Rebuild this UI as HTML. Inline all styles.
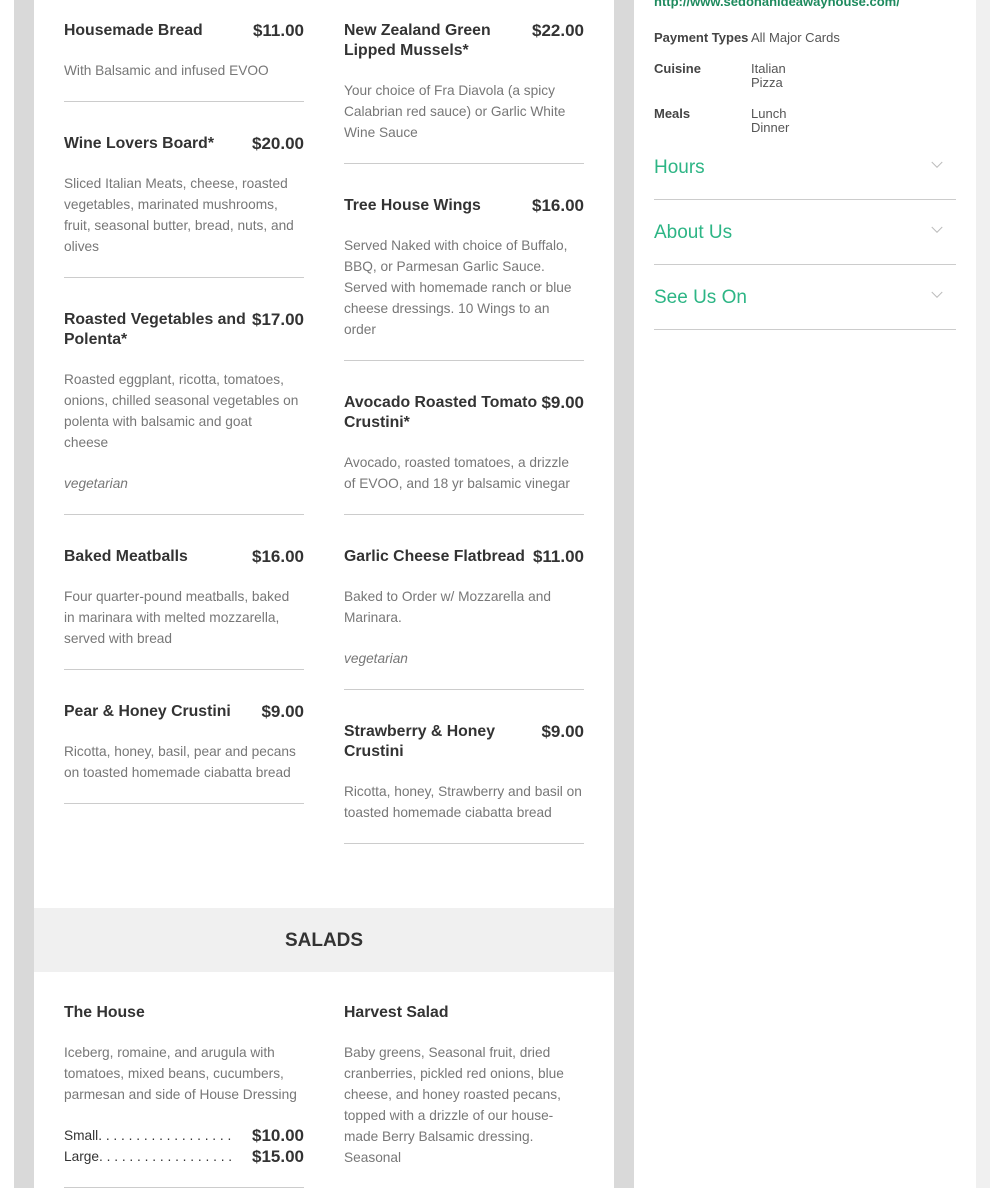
<!DOCTYPE html>
<html><head><meta charset="utf-8"><style>
body{margin:0;width:990px;height:1188px;overflow:hidden;background:#fff;font-family:"Liberation Sans",sans-serif;position:relative}
.a{position:absolute;white-space:nowrap}
.g1{position:absolute;left:14px;top:0;width:620px;height:1188px;background:#d9d9d9}
.card{position:absolute;left:34px;top:0;width:580px;height:1188px;background:#fff}
.side{position:absolute;left:634px;top:0;width:342px;height:1188px;background:#fff}
.g2{position:absolute;left:976px;top:0;width:14px;height:1188px;background:#f0f0f0}
.t{font-size:15.8px;font-weight:bold;color:#333;line-height:20px;margin-top:1px}
.p{font-size:17px;font-weight:bold;color:#333;line-height:20px;text-align:right;width:80px;margin-top:1px}
.d{font-size:13.7px;color:#777;line-height:21px;margin-top:1px}
.v{font-size:13.7px;color:#777;font-style:italic;line-height:21px;margin-top:1px}
.l{position:absolute;height:1px;width:240px;background:#ccc}
.k{font-size:13px;font-weight:bold;color:#444;line-height:14px}
.kv{font-size:13px;color:#555;line-height:14px}
.h{font-size:19px;color:#2db585;line-height:24px;margin-top:1px}
.sl{position:absolute;left:654px;width:302px;height:1px;background:#ccc}
.ch{position:absolute;left:931px;width:12px;height:12px}
</style></head><body>
<div class="g1"></div><div class="card"></div><div class="side"></div><div class="g2"></div>

<div class="a t" style="left:64px;top:20px">Housemade Bread</div><div class="a p" style="left:224px;top:20px">$11.00</div>
<div class="a d" style="left:64px;top:59px">With Balsamic and infused EVOO</div>
<div class="l" style="left:64px;top:101px"></div>

<div class="a t" style="left:64px;top:133px">Wine Lovers Board*</div><div class="a p" style="left:224px;top:133px">$20.00</div>
<div class="a d" style="left:64px;top:172px">Sliced Italian Meats, cheese, roasted<br>vegetables, marinated mushrooms,<br>fruit, seasonal butter, bread, nuts, and<br>olives</div>
<div class="l" style="left:64px;top:277px"></div>

<div class="a t" style="left:64px;top:309px">Roasted Vegetables and<br>Polenta*</div><div class="a p" style="left:224px;top:309px">$17.00</div>
<div class="a d" style="left:64px;top:368px">Roasted eggplant, ricotta, tomatoes,<br>onions, chilled seasonal vegetables on<br>polenta with balsamic and goat<br>cheese</div>
<div class="a v" style="left:64px;top:472px">vegetarian</div>
<div class="l" style="left:64px;top:514px"></div>

<div class="a t" style="left:64px;top:546px">Baked Meatballs</div><div class="a p" style="left:224px;top:546px">$16.00</div>
<div class="a d" style="left:64px;top:585px">Four quarter-pound meatballs, baked<br>in marinara with melted mozzarella,<br>served with bread</div>
<div class="l" style="left:64px;top:669px"></div>

<div class="a t" style="left:64px;top:701px">Pear &amp; Honey Crustini</div><div class="a p" style="left:224px;top:701px">$9.00</div>
<div class="a d" style="left:64px;top:740px">Ricotta, honey, basil, pear and pecans<br>on toasted homemade ciabatta bread</div>
<div class="l" style="left:64px;top:803px"></div>

<div class="a t" style="left:344px;top:20px">New Zealand Green<br>Lipped Mussels*</div><div class="a p" style="left:504px;top:20px">$22.00</div>
<div class="a d" style="left:344px;top:79px">Your choice of Fra Diavola (a spicy<br>Calabrian red sauce) or Garlic White<br>Wine Sauce</div>
<div class="l" style="left:344px;top:163px"></div>

<div class="a t" style="left:344px;top:195px">Tree House Wings</div><div class="a p" style="left:504px;top:195px">$16.00</div>
<div class="a d" style="left:344px;top:234px">Served Naked with choice of Buffalo,<br>BBQ, or Parmesan Garlic Sauce.<br>Served with homemade ranch or blue<br>cheese dressings. 10 Wings to an<br>order</div>
<div class="l" style="left:344px;top:360px"></div>

<div class="a t" style="left:344px;top:392px">Avocado Roasted Tomato<br>Crustini*</div><div class="a p" style="left:504px;top:392px">$9.00</div>
<div class="a d" style="left:344px;top:451px">Avocado, roasted tomatoes, a drizzle<br>of EVOO, and 18 yr balsamic vinegar</div>
<div class="l" style="left:344px;top:514px"></div>

<div class="a t" style="left:344px;top:546px">Garlic Cheese Flatbread</div><div class="a p" style="left:504px;top:546px">$11.00</div>
<div class="a d" style="left:344px;top:585px">Baked to Order w/ Mozzarella and<br>Marinara.</div>
<div class="a v" style="left:344px;top:647px">vegetarian</div>
<div class="l" style="left:344px;top:689px"></div>

<div class="a t" style="left:344px;top:721px">Strawberry &amp; Honey<br>Crustini</div><div class="a p" style="left:504px;top:721px">$9.00</div>
<div class="a d" style="left:344px;top:780px">Ricotta, honey, Strawberry and basil on<br>toasted homemade ciabatta bread</div>
<div class="l" style="left:344px;top:843px"></div>

<div style="position:absolute;left:34px;top:908px;width:580px;height:64px;background:#f0f0f0;text-align:center;line-height:66px;font-size:19px;font-weight:bold;color:#333">SALADS</div>

<div class="a t" style="left:64px;top:1002px">The House</div>
<div class="a d" style="left:64px;top:1041px">Iceberg, romaine, and arugula with<br>tomatoes, mixed beans, cucumbers,<br>parmesan and side of House Dressing</div>
<div class="a d" style="left:64px;top:1124px;color:#333">Small. . . . . . . . . . . . . . . . . . . .</div><div class="a p" style="left:224px;top:1125px;background:#fff;width:72px;left:232px">$10.00</div>
<div class="a d" style="left:64px;top:1145px;color:#333">Large. . . . . . . . . . . . . . . . . . . .</div><div class="a p" style="left:232px;top:1146px;background:#fff;width:72px">$15.00</div>
<div class="l" style="left:64px;top:1187px"></div>

<div class="a t" style="left:344px;top:1002px">Harvest Salad</div>
<div class="a d" style="left:344px;top:1041px">Baby greens, Seasonal fruit, dried<br>cranberries, pickled red onions, blue<br>cheese, and honey roasted pecans,<br>topped with a drizzle of our house-<br>made Berry Balsamic dressing.<br>Seasonal</div>

<div class="a" style="left:654px;top:-6px;font-size:13px;font-weight:bold;color:#1e8a5e">http://www.sedonahideawayhouse.com/</div>
<div class="a k" style="left:654px;top:31px">Payment Types</div><div class="a kv" style="left:751px;top:31px">All Major Cards</div>
<div class="a k" style="left:654px;top:62px">Cuisine</div><div class="a kv" style="left:751px;top:62px">Italian<br>Pizza</div>
<div class="a k" style="left:654px;top:107px">Meals</div><div class="a kv" style="left:751px;top:107px">Lunch<br>Dinner</div>

<div class="a h" style="left:654px;top:155px">Hours</div>
<svg class="ch" style="top:159px" viewBox="0 0 16 16"><path d="M1 4l7 7 7-7" fill="none" stroke="#bbb" stroke-width="1.3"/></svg>
<div class="sl" style="top:199px"></div>
<div class="a h" style="left:654px;top:220px">About Us</div>
<svg class="ch" style="top:224px" viewBox="0 0 16 16"><path d="M1 4l7 7 7-7" fill="none" stroke="#bbb" stroke-width="1.3"/></svg>
<div class="sl" style="top:264px"></div>
<div class="a h" style="left:654px;top:285px">See Us On</div>
<svg class="ch" style="top:289px" viewBox="0 0 16 16"><path d="M1 4l7 7 7-7" fill="none" stroke="#bbb" stroke-width="1.3"/></svg>
<div class="sl" style="top:329px"></div>
</body></html>
